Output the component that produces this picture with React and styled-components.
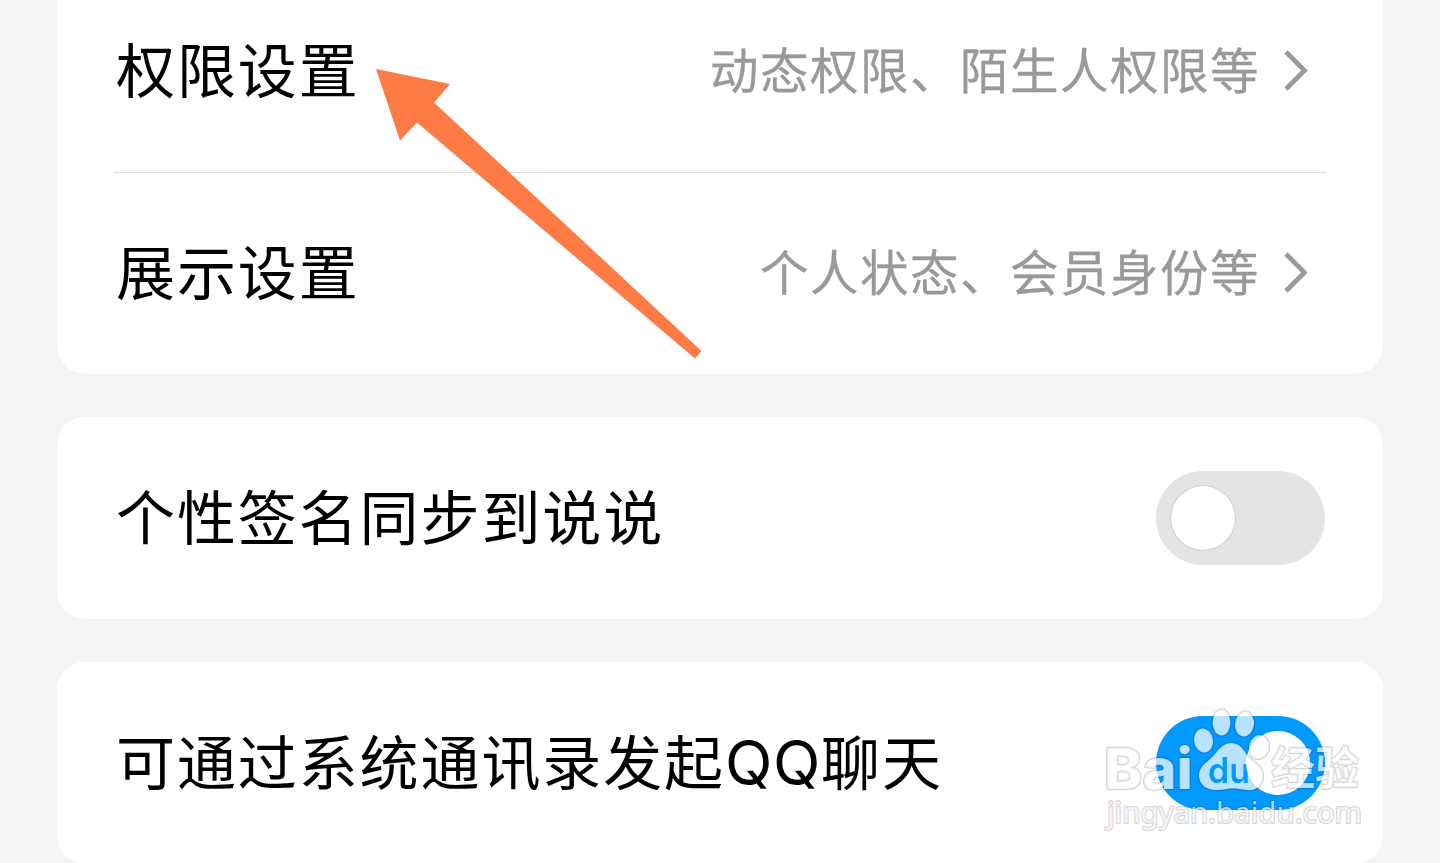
import React from "react";
import styled, { createGlobalStyle } from "styled-components";

const GlobalStyle = createGlobalStyle`
  html, body { margin: 0; padding: 0; background: #f4f4f4; overflow: hidden; }
  * { box-sizing: border-box; }
`;

const Screen = styled.main`
  position: relative;
  height: 863px;
  overflow: hidden;
  padding: 0 57px;
  background: #f4f4f4;
  font-family: "Noto Sans CJK SC", sans-serif;
`;

const List = styled.div`
  display: flex;
  flex-direction: column;
  gap: 43px;
  margin-top: -30px;
`;

const Card = styled.section`
  background: #fff;
  border-radius: 28px;
`;

const Row = styled.div`
  display: flex;
  align-items: center;
  justify-content: space-between;
  height: ${(p) => p.$height || 202}px;
  padding: 0 58px ${(p) => p.$lift || 0}px 59px;
`;

const Divider = styled.div`
  height: 1px;
  margin: 0 57px;
  background: #e0e0e0;
`;

const Label = styled.span`
  padding-bottom: 6px;
  font-size: 59px;
  line-height: 84px;
  letter-spacing: 1.9px;
  color: #000;
  white-space: nowrap;
`;

const Latin = styled.span`
  font-family: Inter, sans-serif;
  font-size: 62px;
  line-height: 1;
  letter-spacing: 0.6px;
`;

const Detail = styled.span`
  display: flex;
  align-items: center;
  gap: 23px;
  padding-right: 16px;
  color: #999;
`;

const DetailText = styled.span`
  padding-bottom: 6px;
  font-size: 48.5px;
  line-height: 70px;
  letter-spacing: 1.5px;
  white-space: nowrap;
  -webkit-text-stroke: 0.3px #999;
`;

const Switch = styled.span`
  display: flex;
  align-items: center;
  justify-content: ${(p) => (p.$on ? "flex-end" : "flex-start")};
  width: 169px;
  height: 94px;
  padding: 0 15px;
  border-radius: 47px;
  background: ${(p) => (p.$on ? "#0099ff" : "#e4e4e4")};
`;

const Knob = styled.span`
  width: 64px;
  height: 64px;
  border-radius: 50%;
  background: #fff;
  box-shadow: 0 0 1px 0.5px ${(p) => (p.$on ? "transparent" : "rgba(0,0,0,.2)")};
`;

const Pointer = styled.svg`
  position: absolute;
  left: 370px;
  top: 60px;
`;

const Watermark = styled.svg`
  position: absolute;
  left: 1090px;
  top: 695px;
`;

const Chevron = () => (
  <svg width="26" height="44" viewBox="0 0 26 44" fill="none">
    <path d="M3 3 L21.500 21.500 L3 40" stroke="#999" strokeWidth="4.600" />
  </svg>
);

const Toggle = ({ on }) => (
  <Switch $on={on} role="switch" aria-checked={!!on}>
    <Knob $on={on} />
  </Switch>
);

const LinkRow = ({ label, detail, height, lift }) => (
  <Row $height={height} $lift={lift}>
    <Label>{label}</Label>
    <Detail>
      <DetailText>{detail}</DetailText>
      <Chevron />
    </Detail>
  </Row>
);

const BaiduMark = () => (
  <Watermark width="300" height="168" viewBox="0 0 300 168">
    <defs>
      <mask id="du" maskUnits="userSpaceOnUse" x="0" y="0" width="300" height="168">
        <rect width="300" height="168" fill="#fff" />
        <text x="118" y="88" fontFamily="Inter, sans-serif" fontWeight="600" fontSize="35" textLength="42" lengthAdjust="spacingAndGlyphs" fill="#000">du</text>
      </mask>
    </defs>
    <g fill="#fff" fillOpacity="0.72" stroke="#000" strokeOpacity="0.16" strokeWidth="2.4" strokeLinejoin="round" paintOrder="stroke">
      <text x="14" y="94" fontFamily="Inter, sans-serif" fontWeight="800" fontSize="56" textLength="89" lengthAdjust="spacingAndGlyphs">Bai</text>
      <g mask="url(#du)">
        <ellipse cx="113.500" cy="45.500" rx="9.500" ry="12" transform="rotate(-8 113.500 45.500)" />
        <ellipse cx="131.500" cy="27.500" rx="9" ry="13" />
        <ellipse cx="154.500" cy="29" rx="9.500" ry="12.500" transform="rotate(8 154.500 29)" />
        <ellipse cx="169" cy="52" rx="10" ry="12" transform="rotate(10 169 52)" />
        <path d="M141 48 C149 48 153 53 157 60 C162 67 173 70 173 81 C173 91 166 96 157 95 C149 94 143 93 137 94 C127 96 114 96 110 86 C106 75 114 69 120 64 C127 58 131 48 141 48Z" />
      </g>
      <text x="181" y="90" fontFamily="Noto Sans CJK SC, sans-serif" fontWeight="700" fontSize="45" textLength="88" lengthAdjust="spacingAndGlyphs">经验</text>
      <text x="17" y="128" fontFamily="Noto Sans, sans-serif" fontSize="29" textLength="255" lengthAdjust="spacingAndGlyphs">jingyan.baidu.com</text>
    </g>
  </Watermark>
);

export default function App() {
  return (
    <>
      <GlobalStyle />
      <Screen>
        <List>
          <Card>
            <LinkRow label="权限设置" detail="动态权限、陌生人权限等" />
            <Divider />
            <LinkRow label="展示设置" detail="个人状态、会员身份等" height={201} lift={2} />
          </Card>
          <Card>
            <Row>
              <Label>个性签名同步到说说</Label>
              <Toggle />
            </Row>
          </Card>
          <Card>
            <Row>
              <Label>可通过系统通讯录发起<Latin>QQ</Latin>聊天</Label>
              <Toggle on />
            </Row>
          </Card>
        </List>
        <Pointer width="340" height="310" viewBox="370 60 340 310">
          <path d="M376 69 L450 84 L434 102.500 L701.500 351 L695 358.500 L417 122.500 L400 140.500Z" fill="#ff7b45" />
        </Pointer>
        <BaiduMark />
      </Screen>
    </>
  );
}
